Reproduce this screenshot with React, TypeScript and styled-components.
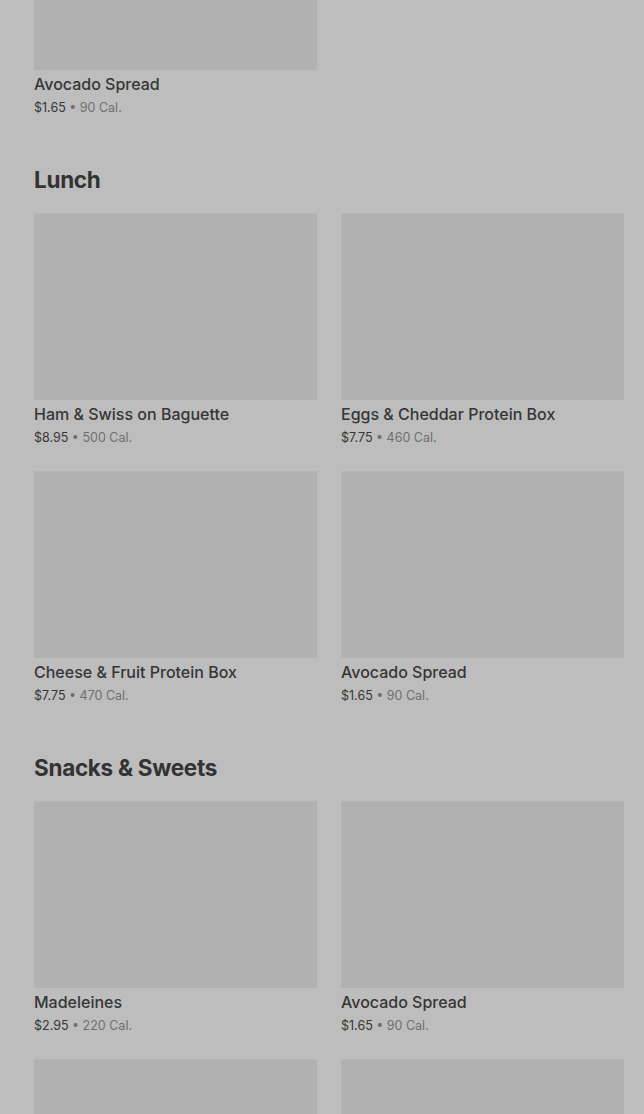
import React from 'react';
import styled, { createGlobalStyle } from 'styled-components';

const GlobalStyle = createGlobalStyle`
  html, body {
    margin: 0;
    padding: 0;
    background: #bdbdbd;
    overflow: hidden;
  }
  body {
    font-family: Inter, 'Noto Sans', sans-serif;
  }
`;

const Page = styled.div`
  padding: 0 20px 0 34px;
`;

const Scrolled = styled.div`
  margin-top: -117px;
`;

const Section = styled.section`
  margin-bottom: 46px;
`;

const Heading = styled.h2`
  margin: 0 0 17px;
  font-size: 22.5px;
  line-height: 32px;
  font-weight: 700;
  letter-spacing: -0.3px;
  color: #333333;
`;

const Grid = styled.div`
  display: grid;
  grid-template-columns: 1fr 1fr;
  column-gap: 24px;
  row-gap: 23px;
`;

const Card = styled.div`
  display: flex;
  flex-direction: column;
`;

const Thumb = styled.div`
  height: 187px;
  background: #b1b1b1;
  border-top: 1px solid #b5b5b5;
  box-sizing: border-box;
`;

const Title = styled.div`
  margin-top: 4px;
  font-size: 16px;
  line-height: 20px;
  font-weight: 500;
  color: #363636;
`;

const Meta = styled.div`
  margin-top: 4px;
  font-size: 12.5px;
  line-height: 20px;
  color: #6f6f6f;
`;

const Price = styled.span`
  color: #363636;
`;

type Item = { name: string; price: string; cal: number };

const avocado: Item = { name: 'Avocado Spread', price: '$1.65', cal: 90 };

const sections: { title?: string; items: Item[] }[] = [
  { items: [avocado] },
  {
    title: 'Lunch',
    items: [
      { name: 'Ham & Swiss on Baguette', price: '$8.95', cal: 500 },
      { name: 'Eggs & Cheddar Protein Box', price: '$7.75', cal: 460 },
      { name: 'Cheese & Fruit Protein Box', price: '$7.75', cal: 470 },
      avocado,
    ],
  },
  {
    title: 'Snacks & Sweets',
    items: [
      { name: 'Madeleines', price: '$2.95', cal: 220 },
      avocado,
      { name: 'Croissant', price: '$2.45', cal: 260 },
      { name: 'Chocolate Chip Cookie', price: '$1.95', cal: 380 },
    ],
  },
];

const MenuCard = ({ item }: { item: Item }) => (
  <Card>
    <Thumb />
    <Title>{item.name}</Title>
    <Meta>
      <Price>{item.price}</Price> • {item.cal} Cal.
    </Meta>
  </Card>
);

const App = () => (
  <>
    <GlobalStyle />
    <Page>
      <Scrolled>
        {sections.map((s, i) => (
          <Section key={i}>
            {s.title && <Heading>{s.title}</Heading>}
            <Grid>
              {s.items.map((item, j) => (
                <MenuCard key={j} item={item} />
              ))}
            </Grid>
          </Section>
        ))}
      </Scrolled>
    </Page>
  </>
);

export default App;
